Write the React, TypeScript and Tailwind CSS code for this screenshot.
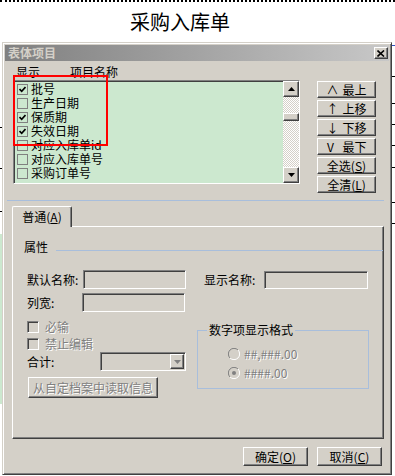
import clsx from "clsx";

const raised =
  "bg-[#d4d0c8] border border-t-white border-l-white border-r-[#404040] border-b-[#404040] shadow-[inset_-1px_-1px_0_#808080]";
const sunken =
  "border border-t-[#808080] border-l-[#808080] border-r-white border-b-white shadow-[inset_1px_1px_0_#404040]";
const grayed = "text-[#808080] [text-shadow:1px_1px_0_#fff]";

const items = [
  { name: "批号", on: true },
  { name: "生产日期", on: false },
  { name: "保质期", on: true },
  { name: "失效日期", on: true },
  { name: "对应入库单id", on: false },
  { name: "对应入库单号", on: false },
  { name: "采购订单号", on: false },
];

const moveButtons = [
  { sym: "∧", label: "最上" },
  { sym: "↑", label: "上移" },
  { sym: "↓", label: "下移" },
  { sym: "V", label: "最下" },
];

function Tick() {
  return (
    <svg width="7" height="7" viewBox="0 0 7 7">
      <path d="M0.5 3 L2.7 5.3 L6.5 1" stroke="#000" strokeWidth="1.7" fill="none" />
    </svg>
  );
}

function Arrow({ up, color = "#000" }: { up?: boolean; color?: string }) {
  return (
    <svg width="7" height="4" viewBox="0 0 7 4">
      <path d={up ? "M3.5 0 L7 4 L0 4 Z" : "M0 0 L7 0 L3.5 4 Z"} fill={color} />
    </svg>
  );
}

function Radio({ checked }: { checked?: boolean }) {
  return (
    <svg width="12" height="12" viewBox="0 0 12 12">
      <circle cx="6" cy="6" r="5.5" fill="#d4d0c8" />
      <path d="M10 2 A5.5 5.5 0 0 0 2 10" stroke="#808080" strokeWidth="1" fill="none" />
      <path d="M2 10 A5.5 5.5 0 0 0 10 2" stroke="#fff" strokeWidth="1" fill="none" />
      {checked && <circle cx="6" cy="6" r="2" fill="#808080" />}
    </svg>
  );
}

function Btn({ className, children }: { className?: string; children: React.ReactNode }) {
  return <div className={clsx("flex items-center justify-center", raised, className)}>{children}</div>;
}

function Field({ className }: { className?: string }) {
  return <div className={clsx("bg-[#d4d0c8]", sunken, className)} />;
}

export default function App() {
  return (
    <div className="relative w-[395px] h-[476px] overflow-hidden bg-white text-[12px] leading-[14px] text-black font-['Noto_Sans_CJK_SC',sans-serif]">
      <div className="h-[2px] border-t-2 border-dotted border-black" />
      <div className="mt-[8px] h-[24px] pl-[130px] text-[20px] leading-[24px]">采购入库单</div>

      <div className="mt-[8px] flex">
        <div className="w-[2px] flex flex-col">
          <div className="mt-[85px] h-px bg-black" />
          <div className="mt-[40px] h-px bg-black" />
          <div className="mt-[42px] h-px bg-black" />
          <div className="mt-[22px] h-[170px] bg-[#cce8cf]" />
        </div>

        {/* dialog */}
        <div className="w-[390px] h-[433px] p-[2px] flex flex-col bg-[#d4d0c8] border border-t-[#d4d0c8] border-l-[#d4d0c8] border-r-[#404040] border-b-[#404040] shadow-[inset_1px_1px_0_#fff,inset_-1px_-1px_0_#808080]">
          <div className="h-[16px] flex items-center justify-between bg-linear-to-r from-[#808080] to-[#c8c8c8]">
            <span className="pl-[3px] font-bold text-[#d4d0c8]">表体项目</span>
            <Btn className="w-[14px] h-[12px] mr-[1px]">
              <svg width="8" height="7" viewBox="0 0 8 7">
                <path d="M0.5 0.5 L7 6.5 M7 0.5 L0.5 6.5" stroke="#000" strokeWidth="1.6" />
              </svg>
            </Btn>
          </div>

          <div className="h-[19px] pt-[4px] pl-[11px] flex">
            <span className="w-[54px]">显示</span>
            <span>项目名称</span>
          </div>

          <div className="h-[114px] pl-[8px] flex items-start">
            <div className={clsx("w-[287px] h-[104px] flex bg-[#cce8cf]", sunken)}>
              <div className="flex-1 flex flex-col pt-[1px] pl-[3px]">
                {items.map((it) => (
                  <div key={it.name} className="h-[14px] flex items-center gap-[3px]">
                    <span className="w-[11px] h-[11px] border border-[#808080] flex items-center justify-center">
                      {it.on && <Tick />}
                    </span>
                    <span>{it.name}</span>
                  </div>
                ))}
              </div>
              <div className="w-[16px] flex flex-col">
                <Btn className="h-[16px]">
                  <Arrow up />
                </Btn>
                <div className="h-[16px] bg-[repeating-conic-gradient(#fff_0_25%,#d4d0c8_0_50%)] bg-size-[2px_2px]" />
                <div className={clsx("h-[8px]", raised)} />
                <div className="flex-1 bg-[repeating-conic-gradient(#fff_0_25%,#d4d0c8_0_50%)] bg-size-[2px_2px]" />
                <Btn className="h-[16px]">
                  <Arrow />
                </Btn>
              </div>
            </div>

            <div className="ml-[17px] pt-[1px] w-[59px] flex flex-col gap-[2px]">
              {moveButtons.map((b) => (
                <Btn key={b.label} className="h-[17px] gap-[8px]">
                  <span className="w-[8px] text-center">{b.sym}</span>
                  <span>{b.label}</span>
                </Btn>
              ))}
              <Btn className="h-[17px]">
                全选(<u>S</u>)
              </Btn>
              <Btn className="h-[17px]">
                全清(<u>L</u>)
              </Btn>
            </div>
          </div>

          <div className="mt-[6px] ml-[2px] w-[377px] h-px bg-[#a8bedc]" />

          {/* tab */}
          <div className="mt-[5px] ml-[7px] relative z-[1] -mb-px w-[60px] h-[21px] flex items-center justify-center bg-[#d4d0c8] border border-b-0 border-t-white border-l-white border-r-[#404040] rounded-t-[2px] shadow-[inset_-1px_0_0_#808080]">
            普通(<u>A</u>)
          </div>

          <div className="ml-[7px] w-[372px] h-[213px] flex flex-col border border-t-white border-l-white border-r-[#404040] border-b-[#404040] shadow-[inset_-1px_-1px_0_#808080]">
            <div className="mt-[13px] h-[14px] flex items-start pl-[11px]">
              <span>属性</span>
              <div className="mt-[10px] ml-[8px] flex-1 h-px bg-[#a8bedc]" />
            </div>

            <div className="mt-[16px] pl-[14px] flex items-start">
              <span className="w-[56px] h-[19px] flex items-center">默认名称:</span>
              <Field className="w-[103px] h-[19px]" />
              <span className="ml-[18px] w-[60px] h-[19px] flex items-center">显示名称:</span>
              <Field className="mt-px w-[104px] h-[18px]" />
            </div>

            <div className="mt-[4px] pl-[14px] flex items-start">
              <span className="w-[55px] h-[19px] flex items-center">列宽:</span>
              <Field className="w-[103px] h-[19px]" />
            </div>

            <div className="flex">
              <div className="w-[184px] pl-[14px] flex flex-col">
                <div className="mt-[8px] h-[13px] flex items-center">
                  <Field className="w-[12px] h-[12px]" />
                  <span className={clsx("ml-[6px]", grayed)}>必输</span>
                </div>
                <div className="mt-[4px] h-[13px] flex items-center">
                  <Field className="w-[12px] h-[12px]" />
                  <span className={clsx("ml-[6px]", grayed)}>禁止编辑</span>
                </div>
                <div className="mt-[2px] h-[19px] flex items-center">
                  <span className="w-[73px]">合计:</span>
                  <div className={clsx("w-[86px] h-[19px] flex justify-end items-center pr-[1px] bg-[#d4d0c8]", sunken)}>
                    <Btn className="w-[14px] h-[15px]">
                      <Arrow color="#808080" />
                    </Btn>
                  </div>
                </div>
                <Btn className="mt-[6px] ml-px w-[130px] h-[21px]">
                  <span className={grayed}>从自定档案中读取信息</span>
                </Btn>
              </div>

              <fieldset className="mt-[11px] w-[172px] h-[66px] p-0 border border-[#a8bedc]">
                <legend className="ml-[9px] px-[2px] leading-[14px]">数字项显示格式</legend>
                <div className="mt-[10px] pl-[30px] h-[13px] flex items-center gap-[4px]">
                  <Radio />
                  <span className={grayed}>##,###.00</span>
                </div>
                <div className="mt-[6px] pl-[30px] h-[13px] flex items-center gap-[4px]">
                  <Radio checked />
                  <span className={grayed}>####.00</span>
                </div>
              </fieldset>
            </div>
          </div>

          <div className="mt-[8px] pr-[7px] flex justify-end gap-[9px]">
            <Btn className="w-[65px] h-[19px]">
              确定(<u>O</u>)
            </Btn>
            <Btn className="w-[65px] h-[19px]">
              取消(<u>C</u>)
            </Btn>
          </div>
        </div>

        <div className="w-[3px] flex flex-col">
          <div className="mt-[3px] h-px bg-[#3050c0]" />
          <div className="mt-[30px] h-px bg-black" />
          <div className="mt-[26px] h-px bg-black" />
          <div className="mt-[20px] h-px bg-black" />
          <div className="mt-[20px] h-px bg-black" />
          <div className="mt-[21px] h-px bg-black" />
          <div className="mt-[34px] h-px bg-black" />
          <div className="mt-[20px] h-px bg-black" />
        </div>
      </div>

      {/* red annotation frame */}
      <div className="absolute left-[13px] top-[75px] w-[95px] h-[71px] border-2 border-[#ff0000]" />
    </div>
  );
}
